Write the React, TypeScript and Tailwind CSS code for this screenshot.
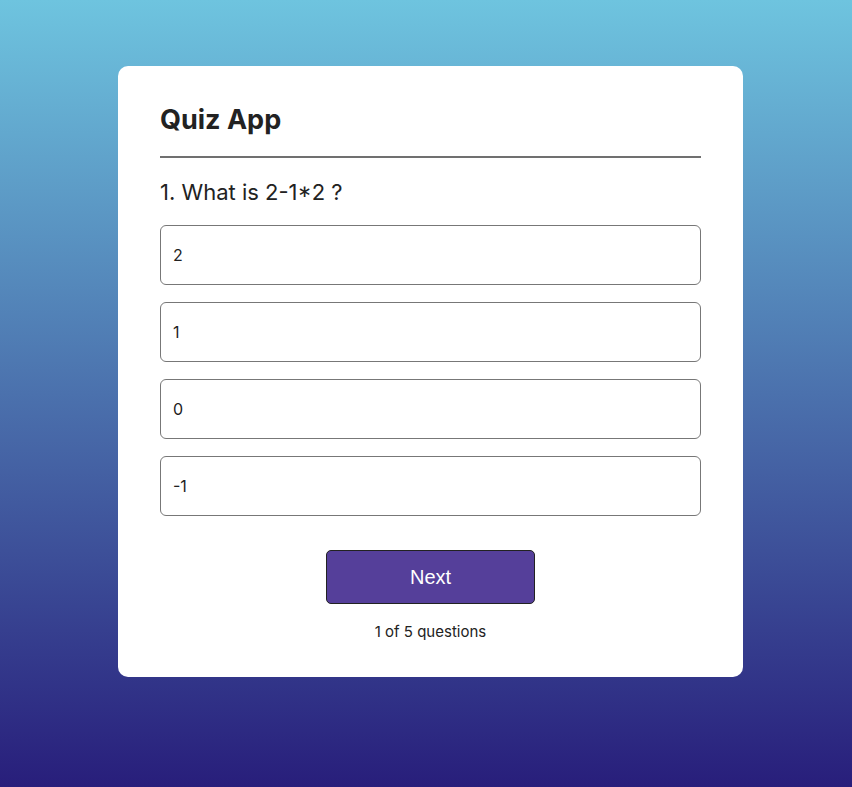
export default function App() {
  const options = ["2", "1", "0", "-1"];
  return (
    <div className="min-h-[787px] w-full bg-[linear-gradient(to_bottom,#6ec4df,#281e7b)] pt-[66px] pb-[110px]" style={{ fontFamily: "Inter, 'Noto Sans', sans-serif" }}>
      <div className="ml-[118px] w-[625px] rounded-[10px] bg-white px-[42px] pt-[34px] pb-[33px]">
        <h1 className="text-[27px] font-bold leading-[40px] text-[#222]">Quiz App</h1>
        <div className="mt-[16px] h-[2px] bg-[#707070]" />
        <h2 className="mt-[18px] text-[22px] leading-[32px] text-[#222]">1. What is 2-1*2 ?</h2>
        <ul className="mt-[17px] flex flex-col gap-[17px]">
          {options.map((o) => (
            <li key={o} className="flex h-[60px] items-center rounded-[6px] border border-[#777] pl-[12px] text-[16px] text-[#222]">
              {o}
            </li>
          ))}
        </ul>
        <div className="mt-[34px] flex flex-col items-center">
          <button className="h-[54px] w-[209px] rounded-[5px] border border-[#222] bg-[#553f9a] text-[20px] text-white" style={{ fontFamily: "'Liberation Sans', Arial, sans-serif" }}>
            Next
          </button>
          <p className="mt-[16px] text-[15px] leading-[24px] text-[#222]">1 of 5 questions</p>
        </div>
      </div>
    </div>
  );
}
